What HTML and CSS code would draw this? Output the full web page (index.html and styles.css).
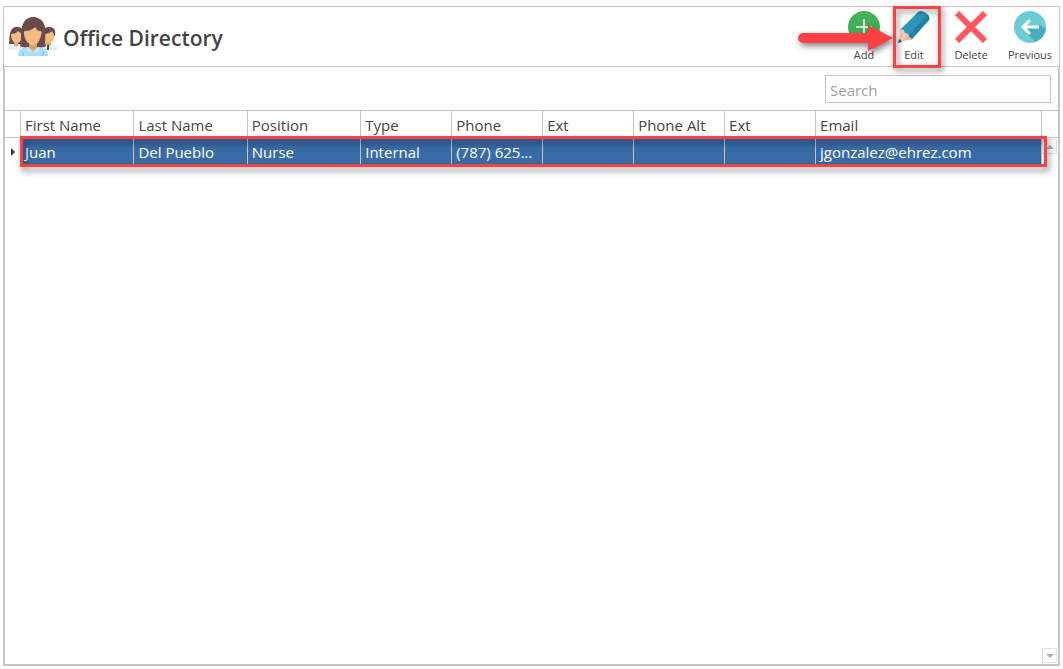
FILE: index.html
```html
<!DOCTYPE html>
<html lang="en">
<head>
    <meta charset="UTF-8">
    <meta name="viewport" content="width=device-width, initial-scale=1.0">
    <title>Office Directory</title>
    <link rel="stylesheet" href="styles.css">
</head>
<body>
    <main class="window">
        <header class="header">
            <svg class="logo" viewBox="0 0 50 40" aria-hidden="true">
                <!-- left person -->
                <path d="M1 27C2 23 0 11 8 10c7-1 9 5 8 17z" fill="#6b4a4b"/>
                <path d="M0 33c0-4 3-6 8-6s8 2 8 6z" fill="#e9eff8"/>
                <path d="M6 23h4v5l-2 2-2-2z" fill="#e0a06c"/>
                <path d="M3 17c3 0 6-1 7-3l4 3c0 6-2 9-5 9s-6-3-6-9z" fill="#f2bc83"/>
                <!-- right person -->
                <path d="M34 18c-1-6 3-8 7-8 5 0 7 3 6 9z" fill="#6b4a4b"/>
                <path d="M34 33v-6h7c5 0 9 2 9 6z" fill="#e9eff8"/>
                <path d="M38 23h5v5l-2 1-3-1z" fill="#e0a06c"/>
                <path d="M35 17c4 0 8-1 9-3l2 4c0 5-2 8-5 8s-6-3-6-9z" fill="#f2bc83"/>
                <path d="M39 28h2v5h-2z" fill="#3d4a67"/>
                <!-- front person -->
                <path d="M12 29c2-7 0-16 3-22 2-5 6-7 10-7s9 2 11 7c3 6 0 16 2 22-3 3-23 3-26 0z" fill="#6b4a4b"/>
                <path d="M10 39c0-6 3-8 9-9h12c6 1 9 3 9 9z" fill="#a9dcf7"/>
                <path d="M21 25h8v6l-4 4-4-4z" fill="#e0a06c"/>
                <path d="M16 17c0-2 0-3 1-3 5 0 8-2 10-4 2 3 3 4 5 4 2 0 2 2 1 4-1 6-4 10-8 10s-8-4-9-11z" fill="#f2bc83"/>
                <path d="M19 30l6 4 6-4 1 3-4 3-3-2-3 2-4-3z" fill="#c0e8fb"/>
                <path d="M15 35v4M35 35v4" stroke="#84c3e8"/>
            </svg>
            <h1>Office Directory</h1>
            <nav class="toolbar">
                <button type="button" class="tool">
                    <svg viewBox="0 0 32 32" aria-hidden="true">
                        <circle cx="16" cy="16" r="16" fill="#43b05c"/>
                        <path d="M16 8v16M8 16h16" stroke="#fff" stroke-width="1.5"/>
                    </svg>
                    Add
                </button>
                <button type="button" class="tool tool-edit">
                    <svg viewBox="0 0 32 32" aria-hidden="true">
                        <path d="M2 19L20 1q1-1 3-1 5 1 8 5 1 2 0 4L13 29z" fill="#2b96bb"/>
                        <path d="M10 25L29 4q3 2 2 5L14 28z" fill="#1f82a8"/>
                        <path d="M3 18l3 1 1 3 3 1 1 3 3 2-13 3z" fill="#fccbb6"/>
                        <path d="M10 23l1 3 3 2-9 2z" fill="#eeb59f"/>
                        <path d="M1 28q2 0 3 3l-4 1z" fill="#2c6f8c"/>
                    </svg>
                    Edit
                    <svg class="pointer" viewBox="0 0 96 28" aria-hidden="true">
                        <path d="M5 9h65V1l25 13-25 13v-8H5a5 5 0 0 1 0-10z" fill="#fb4144"/>
                    </svg>
                </button>
                <button type="button" class="tool tool-delete">
                    <svg viewBox="0 0 32 32" aria-hidden="true">
                        <path d="M2 2l28 28M30 2L2 30" stroke="#ff575b" stroke-width="6"/>
                    </svg>
                    Delete
                </button>
                <button type="button" class="tool tool-previous">
                    <svg viewBox="0 0 32 32" aria-hidden="true">
                        <circle cx="16" cy="16" r="16" fill="#68cdd7"/>
                        <path d="M8 17l13 14q9-3 11-13l-7-4-9 3z" fill="#4aadb9"/>
                        <path d="M25 16H9M16 9l-7 7 7 7" fill="none" stroke="#fff" stroke-width="3"/>
                    </svg>
                    Previous
                </button>
            </nav>
        </header>

        <section class="panel">
            <div class="search-bar">
                <input type="search" placeholder="Search" aria-label="Search">
            </div>
            <div class="grid">
                <table>
                    <colgroup>
                        <col class="col-marker">
                        <col class="col-name">
                        <col class="col-name">
                        <col class="col-name">
                        <col class="col-short">
                        <col class="col-short">
                        <col class="col-short">
                        <col class="col-short">
                        <col class="col-short">
                        <col>
                        <col class="col-scroll">
                    </colgroup>
                    <thead>
                        <tr>
                            <th></th>
                            <th>First Name</th>
                            <th>Last Name</th>
                            <th>Position</th>
                            <th>Type</th>
                            <th>Phone</th>
                            <th>Ext</th>
                            <th>Phone Alt</th>
                            <th>Ext</th>
                            <th>Email</th>
                            <th></th>
                        </tr>
                    </thead>
                    <tbody>
                        <tr>
                            <td class="marker"><span></span></td>
                            <td>Juan</td>
                            <td>Del Pueblo</td>
                            <td>Nurse</td>
                            <td>Internal</td>
                            <td>(787) 625...</td>
                            <td></td>
                            <td></td>
                            <td></td>
                            <td>jgonzalez@ehrez.com</td>
                            <td class="blank"></td>
                        </tr>
                    </tbody>
                </table>
                <div class="scrollbar">
                    <button type="button" class="up" aria-label="Scroll up"></button>
                    <button type="button" class="down" aria-label="Scroll down"></button>
                </div>
                <div class="row-outline"></div>
            </div>
        </section>
    </main>
</body>
</html>
```

FILE: styles.css
```css
:root {
    --line: #c6c6c6;
    --text: #444;
    --row: #396ba7;
    --mark: #fb4144;
}

*, *::before, *::after {
    margin: 0;
    padding: 0;
    box-sizing: border-box;
}

body {
    min-height: 100vh;
    padding: 6px 3px 3px;
    display: flex;
    background: #fff;
    color: var(--text);
    font-family: "Segoe UI", "Open Sans", "Noto Sans", sans-serif;
    font-size: 15px;
}

button, input {
    font: inherit;
    color: inherit;
}

.window {
    flex: 1;
    display: flex;
    flex-direction: column;
    border: 1px solid var(--line);
}

/* Header */
.header {
    height: 59px;
    padding: 0 2px 0 4px;
    display: flex;
    align-items: center;
}

.logo {
    width: 50px;
    height: 40px;
}

h1 {
    flex: 1;
    margin-left: 5px;
    padding-top: 2px;
    font-size: 21px;
    font-weight: 600;
}

.toolbar {
    display: flex;
    align-self: flex-start;
}

.tool {
    position: relative;
    width: 50px;
    padding-top: 4px;
    display: flex;
    flex-direction: column;
    align-items: center;
    gap: 4px;
    border: none;
    background: none;
    font-size: 11px;
    line-height: 16px;
    cursor: pointer;
}

.tool svg {
    width: 32px;
    height: 32px;
}

.tool-delete {
    width: 64px;
}

.tool-previous {
    width: 54px;
}

.tool-edit {
    z-index: 1;
}

.tool-edit::after {
    content: '';
    position: absolute;
    top: -1px;
    left: 4px;
    width: 48px;
    height: 62px;
    border: 3px solid var(--mark);
    filter: drop-shadow(2px 3px 3px rgba(0, 0, 0, 0.5));
}

.tool .pointer {
    position: absolute;
    top: 17px;
    right: 45px;
    width: 96px;
    height: 28px;
    filter: drop-shadow(2px 3px 3px rgba(0, 0, 0, 0.5));
}

/* Panel */
.panel {
    flex: 1;
    display: flex;
    flex-direction: column;
    border: 1px solid var(--line);
}

.search-bar {
    padding: 8px 7px;
    display: flex;
    justify-content: flex-end;
}

.search-bar input {
    width: 226px;
    height: 28px;
    padding: 2px 4px 0;
    border: 1px solid var(--line);
    outline: none;
    appearance: none;
}

.search-bar input::placeholder {
    color: #a0a0a0;
}

/* Grid */
.grid {
    position: relative;
    flex: 1;
    margin-top: -1px;
}

table {
    width: 100%;
    table-layout: fixed;
    border-collapse: separate;
    border-spacing: 0;
    border-top: 1px solid var(--line);
}

.col-marker {
    width: 16px;
}

.col-name {
    width: 10.77%;
}

.col-short {
    width: 8.64%;
}

.col-scroll {
    width: 16px;
}

th, td {
    height: 27px;
    padding: 0 4px;
    border-right: 1px solid var(--line);
    font-weight: 400;
    line-height: 26px;
    text-align: left;
    white-space: nowrap;
    overflow: hidden;
}

th {
    padding-top: 2px;
    border-bottom: 1px solid var(--line);
    line-height: 24px;
}

th:last-child {
    border-right: none;
}

td {
    background: var(--row);
    color: #fff;
}

td.marker, td.blank {
    background: none;
}

td.blank {
    border-right: none;
}

.marker span {
    display: block;
    margin-left: 2px;
    width: 4px;
    border: 4px solid transparent;
    border-left-color: #333;
    border-right: none;
}

/* Scrollbar */
.scrollbar {
    position: absolute;
    top: 29px;
    right: 1px;
    bottom: 1px;
    width: 15px;
    display: flex;
    flex-direction: column;
    justify-content: space-between;
}

.scrollbar button {
    height: 15px;
    display: flex;
    align-items: center;
    justify-content: center;
    border: 1px solid #e2e2e2;
    background: #fff;
}

.scrollbar button::before {
    content: '';
    border: 4px solid transparent;
}

.scrollbar .up::before {
    border-top: none;
    border-bottom-color: #b0b0b0;
}

.scrollbar .down::before {
    border-bottom: none;
    border-top-color: #b0b0b0;
}

/* Outline round the selected row */
.row-outline {
    position: absolute;
    top: 26px;
    left: 15px;
    right: 11px;
    height: 31px;
    border: 3px solid var(--mark);
    filter: drop-shadow(2px 4px 3px rgba(0, 0, 0, 0.5));
    pointer-events: none;
}
```
